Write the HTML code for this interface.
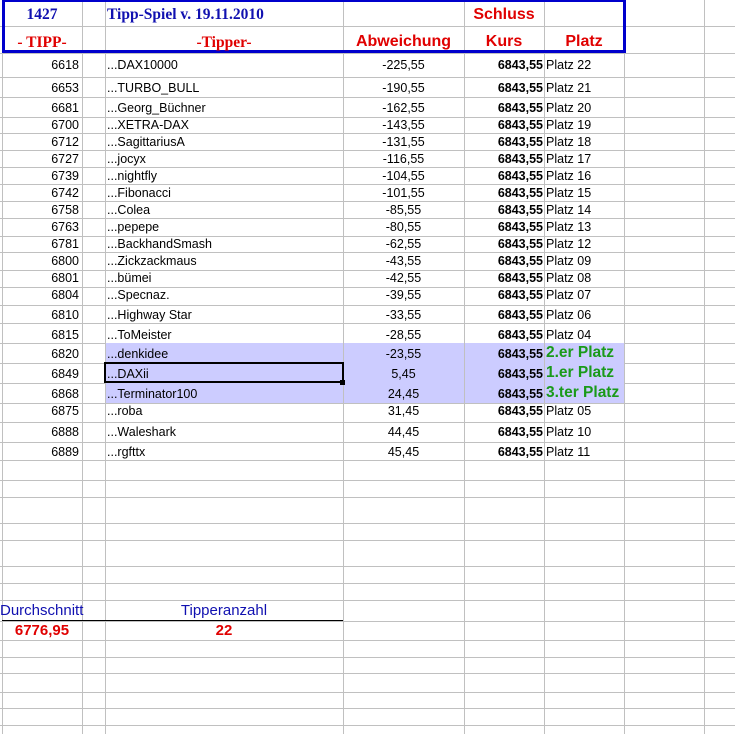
<!DOCTYPE html>
<html><head><meta charset="utf-8"><style>
body{margin:0;width:735px;height:734px;background:#fff;position:relative;overflow:hidden;font-family:"Liberation Sans",Arial,sans-serif;font-size:12.5px;color:#000}
.h{position:absolute;left:0;width:735px;height:1px;background:#c0c0c0}
.v{position:absolute;top:0;height:734px;width:1px;background:#c0c0c0}
.c{position:absolute;white-space:nowrap}
.a{left:2px;width:77px;text-align:right}
.b{left:107px}
.cc{left:343px;width:121px;text-align:center}
.d{left:464px;width:79px;text-align:right;font-weight:bold;font-size:12.5px}
.e{left:546px}
.g{color:#1a9a1a;font-weight:bold;font-size:15.5px}
.ser{font-family:"Liberation Serif",serif;font-weight:bold;font-size:15.5px}
.red{color:#e00000}
.blu{color:#1010b0}
.hr{font-weight:bold;font-size:16px;color:#e00000}
</style></head><body>
<div class="h" style="top:26px"></div><div class="h" style="top:53px"></div>
<div class="h" style="top:77px"></div><div class="h" style="top:97px"></div><div class="h" style="top:117px"></div><div class="h" style="top:133px"></div><div class="h" style="top:150px"></div><div class="h" style="top:167px"></div><div class="h" style="top:184px"></div><div class="h" style="top:201px"></div><div class="h" style="top:218px"></div><div class="h" style="top:236px"></div><div class="h" style="top:252px"></div><div class="h" style="top:270px"></div><div class="h" style="top:287px"></div><div class="h" style="top:305px"></div><div class="h" style="top:323px"></div><div class="h" style="top:343px"></div><div class="h" style="top:363px"></div><div class="h" style="top:383px"></div><div class="h" style="top:403px"></div><div class="h" style="top:422px"></div><div class="h" style="top:442px"></div><div class="h" style="top:460px"></div><div class="h" style="top:480px"></div><div class="h" style="top:497px"></div><div class="h" style="top:523px"></div><div class="h" style="top:540px"></div><div class="h" style="top:566px"></div><div class="h" style="top:583px"></div><div class="h" style="top:600px"></div><div class="h" style="top:621px"></div><div class="h" style="top:640px"></div><div class="h" style="top:657px"></div><div class="h" style="top:673px"></div><div class="h" style="top:692px"></div><div class="h" style="top:708px"></div><div class="h" style="top:725px"></div>
<div style="position:absolute;left:105px;top:343px;width:519px;height:60px;background:#ccccff"></div>
<div class="v" style="left:2px"></div><div class="v" style="left:82px"></div><div class="v" style="left:105px"></div><div class="v" style="left:343px"></div><div class="v" style="left:464px"></div><div class="v" style="left:544px"></div><div class="v" style="left:624px"></div><div class="v" style="left:704px"></div>
<div style="position:absolute;left:2px;top:620px;width:341px;height:1px;background:#000"></div>
<div style="position:absolute;left:2px;top:0;width:618px;height:48px;border:3px solid #0000cc;border-top-width:2px"></div>
<div style="position:absolute;left:104px;top:362px;width:236px;height:17px;border:2px solid #000"></div>
<div style="position:absolute;left:340px;top:380px;width:5px;height:5px;background:#000"></div>

<div class="c ser blu" style="left:2px;width:80px;text-align:center;top:6px">1427</div>
<div class="c ser blu" style="left:107px;top:6px">Tipp-Spiel v. 19.11.2010</div>
<div class="c ser red" style="left:2px;width:80px;text-align:center;top:34px">- TIPP-</div>
<div class="c ser red" style="left:105px;width:238px;text-align:center;top:34px">-Tipper-</div>
<div class="c hr" style="left:343px;width:121px;text-align:center;top:33px">Abweichung</div>
<div class="c hr" style="left:464px;width:80px;text-align:center;top:6px">Schluss</div>
<div class="c hr" style="left:464px;width:80px;text-align:center;top:33px">Kurs</div>
<div class="c hr" style="left:544px;width:80px;text-align:center;top:33px">Platz</div>

<div class="c a" style="top:58px">6618</div><div class="c b" style="top:58px">...DAX10000</div><div class="c cc" style="top:58px">-225,55</div><div class="c d" style="top:58px">6843,55</div><div class="c e" style="top:58px">Platz 22</div>
<div class="c a" style="top:81px">6653</div><div class="c b" style="top:81px">...TURBO_BULL</div><div class="c cc" style="top:81px">-190,55</div><div class="c d" style="top:81px">6843,55</div><div class="c e" style="top:81px">Platz 21</div>
<div class="c a" style="top:101px">6681</div><div class="c b" style="top:101px">...Georg_Büchner</div><div class="c cc" style="top:101px">-162,55</div><div class="c d" style="top:101px">6843,55</div><div class="c e" style="top:101px">Platz 20</div>
<div class="c a" style="top:118px">6700</div><div class="c b" style="top:118px">...XETRA-DAX</div><div class="c cc" style="top:118px">-143,55</div><div class="c d" style="top:118px">6843,55</div><div class="c e" style="top:118px">Platz 19</div>
<div class="c a" style="top:135px">6712</div><div class="c b" style="top:135px">...SagittariusA</div><div class="c cc" style="top:135px">-131,55</div><div class="c d" style="top:135px">6843,55</div><div class="c e" style="top:135px">Platz 18</div>
<div class="c a" style="top:152px">6727</div><div class="c b" style="top:152px">...jocyx</div><div class="c cc" style="top:152px">-116,55</div><div class="c d" style="top:152px">6843,55</div><div class="c e" style="top:152px">Platz 17</div>
<div class="c a" style="top:169px">6739</div><div class="c b" style="top:169px">...nightfly</div><div class="c cc" style="top:169px">-104,55</div><div class="c d" style="top:169px">6843,55</div><div class="c e" style="top:169px">Platz 16</div>
<div class="c a" style="top:186px">6742</div><div class="c b" style="top:186px">...Fibonacci</div><div class="c cc" style="top:186px">-101,55</div><div class="c d" style="top:186px">6843,55</div><div class="c e" style="top:186px">Platz 15</div>
<div class="c a" style="top:203px">6758</div><div class="c b" style="top:203px">...Colea</div><div class="c cc" style="top:203px">-85,55</div><div class="c d" style="top:203px">6843,55</div><div class="c e" style="top:203px">Platz 14</div>
<div class="c a" style="top:220px">6763</div><div class="c b" style="top:220px">...pepepe</div><div class="c cc" style="top:220px">-80,55</div><div class="c d" style="top:220px">6843,55</div><div class="c e" style="top:220px">Platz 13</div>
<div class="c a" style="top:237px">6781</div><div class="c b" style="top:237px">...BackhandSmash</div><div class="c cc" style="top:237px">-62,55</div><div class="c d" style="top:237px">6843,55</div><div class="c e" style="top:237px">Platz 12</div>
<div class="c a" style="top:254px">6800</div><div class="c b" style="top:254px">...Zickzackmaus</div><div class="c cc" style="top:254px">-43,55</div><div class="c d" style="top:254px">6843,55</div><div class="c e" style="top:254px">Platz 09</div>
<div class="c a" style="top:271px">6801</div><div class="c b" style="top:271px">...bümei</div><div class="c cc" style="top:271px">-42,55</div><div class="c d" style="top:271px">6843,55</div><div class="c e" style="top:271px">Platz 08</div>
<div class="c a" style="top:288px">6804</div><div class="c b" style="top:288px">...Specnaz.</div><div class="c cc" style="top:288px">-39,55</div><div class="c d" style="top:288px">6843,55</div><div class="c e" style="top:288px">Platz 07</div>
<div class="c a" style="top:308px">6810</div><div class="c b" style="top:308px">...Highway Star</div><div class="c cc" style="top:308px">-33,55</div><div class="c d" style="top:308px">6843,55</div><div class="c e" style="top:308px">Platz 06</div>
<div class="c a" style="top:328px">6815</div><div class="c b" style="top:328px">...ToMeister</div><div class="c cc" style="top:328px">-28,55</div><div class="c d" style="top:328px">6843,55</div><div class="c e" style="top:328px">Platz 04</div>
<div class="c a" style="top:347px">6820</div><div class="c b" style="top:347px">...denkidee</div><div class="c cc" style="top:347px">-23,55</div><div class="c d" style="top:347px">6843,55</div><div class="c e g" style="top:344px">2.er Platz</div>
<div class="c a" style="top:367px">6849</div><div class="c b" style="top:367px">...DAXii</div><div class="c cc" style="top:367px">5,45</div><div class="c d" style="top:367px">6843,55</div><div class="c e g" style="top:364px">1.er Platz</div>
<div class="c a" style="top:387px">6868</div><div class="c b" style="top:387px">...Terminator100</div><div class="c cc" style="top:387px">24,45</div><div class="c d" style="top:387px">6843,55</div><div class="c e g" style="top:384px">3.ter Platz</div>
<div class="c a" style="top:404px">6875</div><div class="c b" style="top:404px">...roba</div><div class="c cc" style="top:404px">31,45</div><div class="c d" style="top:404px">6843,55</div><div class="c e" style="top:404px">Platz 05</div>
<div class="c a" style="top:425px">6888</div><div class="c b" style="top:425px">...Waleshark</div><div class="c cc" style="top:425px">44,45</div><div class="c d" style="top:425px">6843,55</div><div class="c e" style="top:425px">Platz 10</div>
<div class="c a" style="top:445px">6889</div><div class="c b" style="top:445px">...rgfttx</div><div class="c cc" style="top:445px">45,45</div><div class="c d" style="top:445px">6843,55</div><div class="c e" style="top:445px">Platz 11</div>

<div class="c blu" style="left:0;top:602px;font-size:15px">Durchschnitt</div>
<div class="c blu" style="left:105px;width:238px;text-align:center;top:602px;font-size:15px">Tipperanzahl</div>
<div class="c hr" style="left:2px;width:80px;text-align:center;top:622px;font-size:15px">6776,95</div>
<div class="c hr" style="left:105px;width:238px;text-align:center;top:622px;font-size:15px">22</div>
</body></html>
